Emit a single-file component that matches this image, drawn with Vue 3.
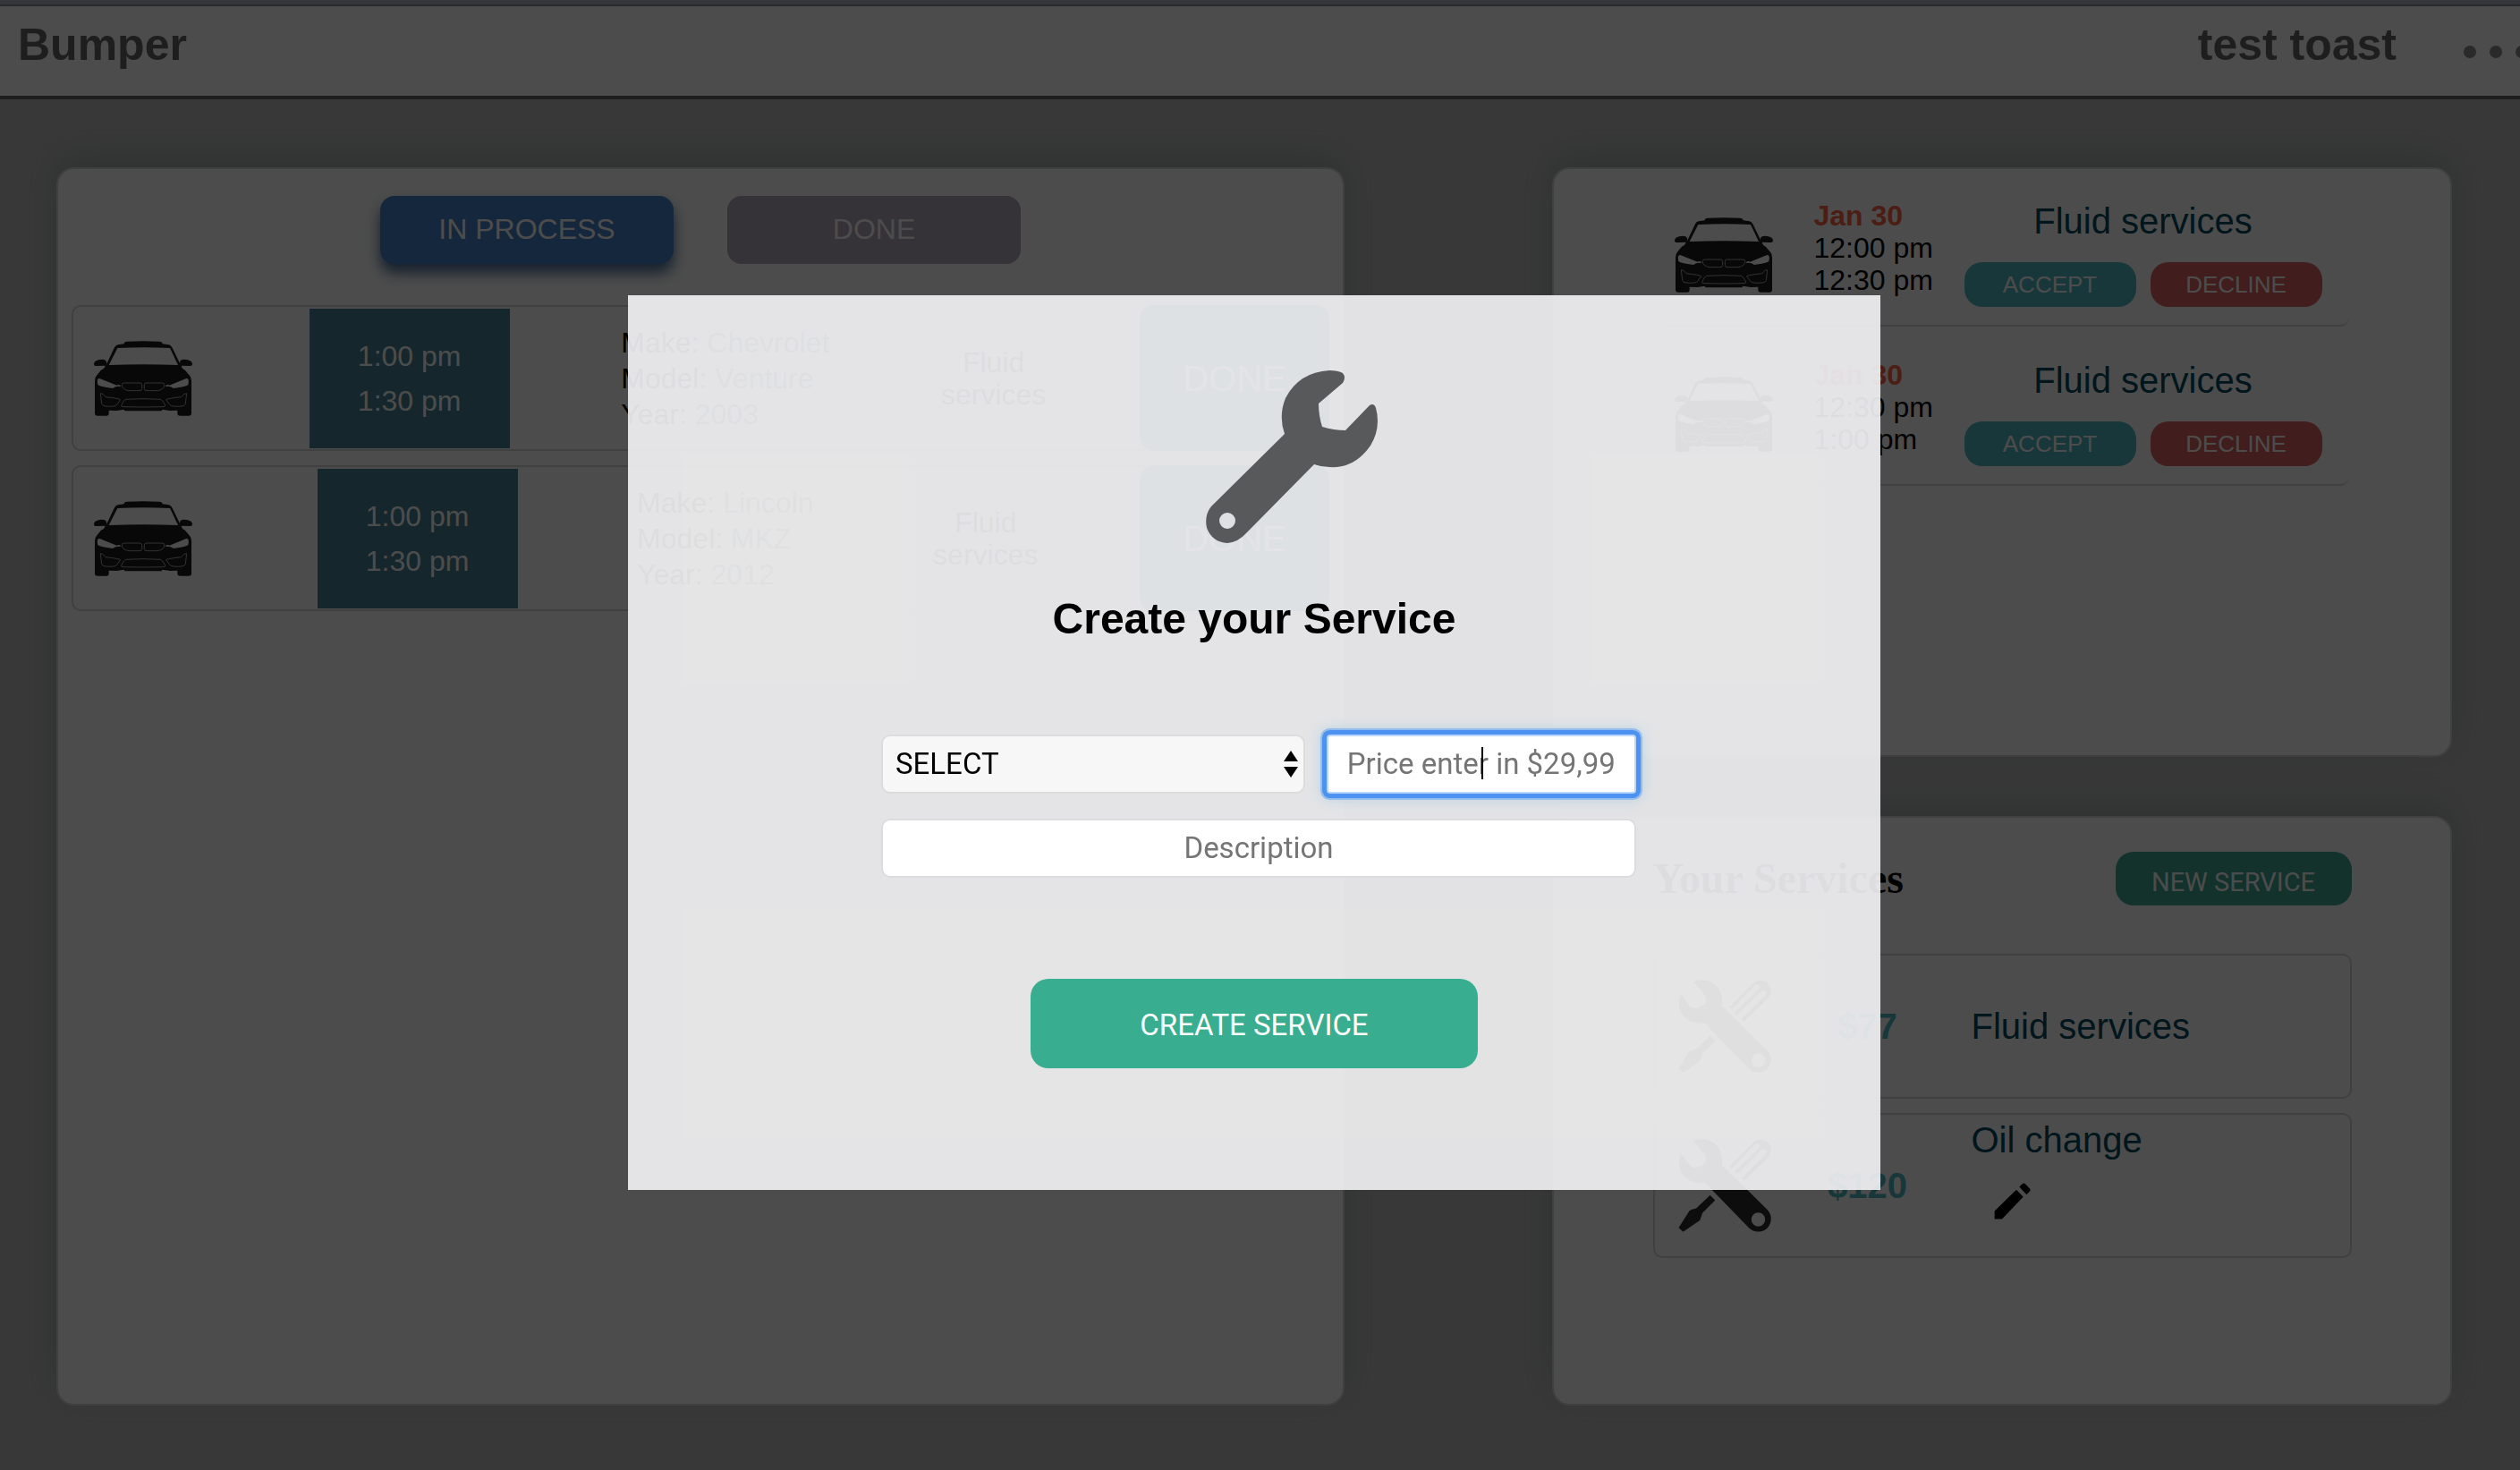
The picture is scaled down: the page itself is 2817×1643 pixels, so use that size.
<script setup>
import { ref } from 'vue'

const jobs = [
  { start: '1:00 pm', end: '1:30 pm', make: 'Chevrolet', model: 'Venture', year: '2003', service: 'Fluid services' },
  { start: '1:00 pm', end: '1:30 pm', make: 'Lincoln', model: 'MKZ', year: '2012', service: 'Fluid services' },
]

const requests = [
  { date: 'Jan 30', start: '12:00 pm', end: '12:30 pm', service: 'Fluid services' },
  { date: 'Jan 30', start: '12:30 pm', end: '1:00 pm', service: 'Fluid services' },
]

const services = [
  { price: '$77', name: 'Fluid services', editable: false },
  { price: '$120', name: 'Oil change', editable: true },
]

const kind = ref('')
const price = ref('')
const description = ref('')
</script>

<template>
  <div class="page">
    <svg class="defs" width="0" height="0" aria-hidden="true">
      <symbol id="car" viewBox="45 57 330 250">
        <path
          fill="#1b1b1b"
          fill-rule="evenodd"
          d="M146 66Q146 58 156 58Q210 55 264 58Q274 58 275 66L296 69Q303 70 307 78L336 137Q330 128 336 121Q342 117 356 119Q375 122 375 134Q375 141 366 140L338 139Q342 152 349 153L366 172Q372 178 372 190V298Q372 307 363 307H334Q325 307 325 298V289L300 290L274 286L272 291H148L146 286L122 290L95 289V298Q95 307 87 307H57Q48 307 48 298V190Q48 178 54 172L70 153Q78 152 83 139L56 140Q45 141 45 134Q45 122 64 119Q78 117 84 121Q90 128 86 137L114 78Q118 70 125 69ZM124 80L95 137Q210 133 327 137L300 80Q212 75 124 80ZM58 185Q55 190 58 203Q62 209 108 215Q118 207 136 209Q132 200 122 205L66 183Q60 181 58 185ZM361 185Q364 190 361 203Q357 209 312 215Q302 207 284 209Q288 200 298 205L353 183Q359 181 361 185Z"
        />
        <g fill="none" stroke="#a8a8a8" stroke-width="3">
          <path d="M148 197H200Q206 197 206 204V216Q206 223 198 223H162Q140 220 138 203Q138 197 148 197Z" />
          <path d="M272 197H220Q214 197 214 204V216Q214 223 222 223H258Q280 220 282 203Q282 197 272 197Z" />
          <path d="M67 232L71 267Q73 274 84 275Q116 278 122 270L134 253Q128 249 84 244L75 234Z" />
          <path d="M356 232L352 267Q350 274 339 275Q305 278 299 270L287 253Q293 249 338 244L348 234Z" />
          <path d="M152 252Q210 248 268 252Q275 253 284 272Q285 277 276 277Q210 279 144 277Q135 277 137 272Q145 253 152 252Z" />
        </g>
      </symbol>
      <symbol id="tools" viewBox="49 89 310 311">
        <g fill="#2e2e2e">
          <path
            fill-rule="evenodd"
            d="M97 96Q130 83 160 97Q200 120 195 176L347 326Q363 345 357 368Q350 392 327 398Q303 402 286 387L137 234Q95 240 67 212Q42 182 57 137L85 175Q97 188 110 184L132 174Q144 167 142 156Q141 145 136 138ZM316 335A23 23 0 1 0 316 381A23 23 0 1 0 316 335Z"
          />
          <path
            fill-rule="evenodd"
            d="M220 180L301 99Q320 84 342 96Q366 115 355 143Q353 148 349 152L269 229L259 221L340 140Q346 132 340 126Q333 122 326 127L245 207L237 199L318 120Q324 112 318 106Q311 103 305 107L228 188Z"
          />
          <path d="M155 277L172 294L129 337Q128 342 121 361L65 399L50 386L86 329Q92 325 109 321Z" />
        </g>
      </symbol>
      <symbol id="pencil" viewBox="1108 241 123 122">
        <path fill="#000" d="M1110 335L1183 264L1206 288L1135 362H1110ZM1193 254L1203 244Q1208 240 1213 244L1228 260Q1232 265 1228 269L1217 280Z" />
      </symbol>
    </svg>

    <header class="topbar">
      <h1 class="brand">Bumper</h1>
      <div class="account">
        <span class="user">test toast</span>
        <button class="more" type="button" aria-label="Menu">
          <svg width="63" height="14" viewBox="0 0 63 14" fill="#8c8c8c">
            <circle cx="7" cy="7" r="7" />
            <circle cx="36" cy="7" r="7" />
            <circle cx="65" cy="7" r="7" />
          </svg>
        </button>
      </div>
    </header>

    <main class="board">
      <section class="panel jobs">
        <div class="tabs">
          <button class="tab active" type="button">IN PROCESS</button>
          <button class="tab" type="button">DONE</button>
        </div>
        <article v-for="job in jobs" :key="job.make" class="job">
          <svg class="car"><use href="#car" /></svg>
          <div class="slot">
            <span>{{ job.start }}</span>
            <span>{{ job.end }}</span>
          </div>
          <div class="vehicle">
            <div>Make: <span>{{ job.make }}</span></div>
            <div>Model: <span>{{ job.model }}</span></div>
            <div>Year: <span>{{ job.year }}</span></div>
          </div>
          <div class="job-service">{{ job.service }}</div>
          <button class="finish" type="button">DONE</button>
        </article>
      </section>

      <div class="side">
        <section class="panel requests">
          <article v-for="item in requests" :key="item.start" class="request">
            <svg class="car"><use href="#car" /></svg>
            <div class="when">
              <strong>{{ item.date }}</strong>
              <span>{{ item.start }}</span>
              <span>{{ item.end }}</span>
            </div>
            <div class="answer">
              <div class="service-name">{{ item.service }}</div>
              <div class="choices">
                <button class="pill accept" type="button">ACCEPT</button>
                <button class="pill decline" type="button">DECLINE</button>
              </div>
            </div>
          </article>
        </section>

        <section class="panel services">
          <div class="services-head">
            <h2>Your Services</h2>
            <button class="new-service" type="button">NEW SERVICE</button>
          </div>
          <article v-for="item in services" :key="item.name" class="service">
            <svg class="tools"><use href="#tools" /></svg>
            <div class="price">{{ item.price }}</div>
            <div class="offer" :class="{ editable: item.editable }">
              <div class="service-name">{{ item.name }}</div>
              <button v-if="item.editable" class="edit" type="button" aria-label="Edit">
                <svg width="41" height="41"><use href="#pencil" /></svg>
              </button>
            </div>
          </article>
        </section>
      </div>
    </main>

    <div class="overlay">
      <form class="modal" @submit.prevent>
        <svg class="wrench" width="193" height="193" viewBox="0 0 193 193" aria-hidden="true">
          <path
            fill="#58595b"
            fill-rule="evenodd"
            d="M138 0Q148 0 153 3Q157 8 153 14L126 37Q126 50 130 63Q143 67 156 67L183 39Q188 36 190 42Q196 64 184 84Q166 110 138 108Q129 108 121 105L45 182Q36 192 24 193Q7 192 1 176Q-2 162 6 152L88 71Q81 51 89 31Q104 2 138 0ZM24 159A9 9 0 1 0 24 177A9 9 0 1 0 24 159Z"
          />
        </svg>
        <h2 class="modal-title">Create your Service</h2>
        <div class="fields">
          <div class="kind">
            <select v-model="kind" aria-label="Service">
              <option value="">SELECT</option>
              <option value="fluid">Fluid services</option>
              <option value="oil">Oil change</option>
            </select>
            <svg class="arrows" width="16" height="30" viewBox="0 0 16 30" aria-hidden="true">
              <path d="M8 0L16 12H0ZM0 18H16L8 30Z" />
            </svg>
          </div>
          <div class="cost">
            <input v-model="price" type="text" placeholder="Price enter in $29,99" aria-label="Price" />
            <span class="caret"></span>
          </div>
          <input v-model="description" class="description" type="text" placeholder="Description" aria-label="Description" />
        </div>
        <button class="create" type="submit">CREATE SERVICE</button>
      </form>
    </div>
  </div>
</template>

<style>
body {
  margin: 0;
  background: #bdbdbd;
}
</style>

<style scoped>
.page,
.page * {
  box-sizing: border-box;
}
.page {
  display: flex;
  flex-direction: column;
  min-height: 100vh;
  overflow: hidden;
  background: #bdbdbd;
  color: #000;
  font: 32px/36px "Liberation Sans", Arial, sans-serif;
}
.defs {
  position: absolute;
}
button {
  padding: 0;
  border: 0;
  color: #fff;
  font: inherit;
  cursor: pointer;
}
h1,
h2 {
  margin: 0;
}

/* Top bar */
.topbar {
  display: flex;
  align-items: center;
  justify-content: space-between;
  height: 111px;
  padding: 0 0 12px 20px;
  border-top: 5px solid #b1b4c8;
  border-bottom: 4px solid #666;
  background: #fff;
  box-shadow: inset 0 2px 0 #8c8c8c;
  color: #666;
}
.brand,
.user {
  font-size: 50px;
  line-height: 56px;
  font-weight: 700;
}
.account {
  display: flex;
  align-items: center;
  gap: 75px;
}
.more {
  display: flex;
  padding-top: 16px;
  background: none;
}

/* Panels */
.board {
  flex: 1;
  display: grid;
  grid-template-columns: 1440fr 1006fr;
  gap: 232px;
  padding: 76px 76px 72px 63px;
}
.side {
  display: grid;
  grid-template-rows: 1fr 1fr;
  gap: 66px;
}
.panel {
  border: 2px solid #d6d6d6;
  border-radius: 20px;
  background: #fff;
  box-shadow: 0 -12px 40px rgba(20, 70, 50, 0.2);
}

/* Jobs */
.jobs {
  display: flex;
  flex-direction: column;
  gap: 16px;
  padding: 30px 15px;
}
.tabs {
  display: flex;
  justify-content: center;
  gap: 60px;
  margin-bottom: 30px;
}
.tab {
  width: 328px;
  height: 76px;
  padding-bottom: 2px;
  border-radius: 16px;
  background: #b1a7bb;
}
.tab.active {
  background: #4682c8;
  box-shadow: 0 10px 16px rgba(50, 90, 140, 0.9);
}
.job {
  display: flex;
  align-items: center;
  justify-content: space-between;
  height: 163px;
  padding-left: 23px;
  border: 2px solid #d6d6d6;
  border-radius: 10px;
}
.car {
  flex: none;
  width: 110px;
  height: 84px;
}
.job .car {
  margin-right: 6px;
}
.slot {
  display: flex;
  flex-direction: column;
  justify-content: center;
  width: 224px;
  height: 156px;
  background: #467f96;
  color: #fff;
  line-height: 50px;
  text-align: center;
}
.vehicle {
  line-height: 40px;
}
.vehicle span {
  color: #33475b;
}
.job-service {
  width: min-content;
  text-align: center;
}
.finish {
  width: 212px;
  height: 163px;
  margin: 0 -2px 0 -20px;
  border-radius: 16px;
  background: #0097a7;
  font-size: 40px;
}

/* Requests */
.requests {
  display: flex;
  flex-direction: column;
  align-items: center;
  gap: 2px;
}
.request {
  display: flex;
  width: 775px;
  height: 176px;
  padding: 34px 0 0 21px;
  border-bottom: 2px solid #d6d6d6;
  border-radius: 10px;
}
.request .car {
  margin-top: 20px;
}
.when {
  display: flex;
  flex-direction: column;
  width: 214px;
  padding-left: 46px;
}
.when strong {
  color: #ff6347;
}
.answer {
  text-align: center;
}
.service-name {
  color: #004b60;
  font-size: 40px;
  line-height: 48px;
}
.choices {
  display: flex;
  gap: 16px;
  margin-top: 22px;
}
.pill {
  width: 192px;
  height: 50px;
  border-radius: 20px;
  font-size: 26px;
}
.accept {
  background: #53b7c1;
}
.decline {
  background: #dc6161;
}

/* Services */
.services {
  display: flex;
  flex-direction: column;
  align-items: center;
  gap: 16px;
  padding-top: 38px;
}
.services-head {
  display: flex;
  align-items: center;
  justify-content: space-between;
  width: 781px;
  margin-bottom: 38px;
}
.services-head h2 {
  font: 700 48px/56px "Liberation Serif", "Times New Roman", serif;
}
.new-service {
  width: 264px;
  height: 60px;
  padding-top: 8px;
  border-radius: 20px;
  background: #3ca78f;
  font-family: Roboto, sans-serif;
  font-size: 29px;
}
.service {
  display: flex;
  align-items: center;
  width: 781px;
  height: 162px;
  padding-left: 26px;
  border: 2px solid #d6d6d6;
  border-radius: 10px;
}
.tools {
  width: 104px;
  height: 104px;
}
.price {
  width: 216px;
  color: #53b7c1;
  font-size: 40px;
  font-weight: 700;
  text-align: center;
}
.offer {
  padding-left: 8px;
}
.offer.editable {
  align-self: flex-start;
  padding-top: 4px;
}
.edit {
  display: block;
  margin: 24px 0 0 25px;
  background: none;
}
.edit svg {
  display: block;
}

/* Modal */
.overlay {
  position: fixed;
  inset: 0;
  display: flex;
  align-items: center;
  justify-content: center;
  padding: 16px 13px 0 0;
  background: rgba(0, 0, 0, 0.7);
}
.modal {
  display: flex;
  flex-direction: column;
  align-items: center;
  width: 1400px;
  max-width: 100%;
  min-height: 1000px;
  padding-top: 84px;
  background: rgba(245, 245, 247, 0.9);
}
.wrench {
  margin-left: 84px;
}
.modal-title {
  margin-top: 57px;
  font-size: 48px;
  line-height: 56px;
}
.fields {
  display: grid;
  grid-template-columns: 473fr 346fr;
  gap: 28px 24px;
  width: 844px;
  margin: 101px 0 0 10px;
}
.kind,
.cost {
  position: relative;
}
select,
input {
  display: block;
  width: 100%;
  height: 66px;
  margin: 0;
  border: 2px solid #dcdcdc;
  border-radius: 10px;
  outline: 0;
  background: #fff;
  color: #000;
  font: 33px/40px Roboto, sans-serif;
}
select {
  appearance: none;
  padding: 0 48px 0 14px;
  background: #f7f7f7;
}
input {
  padding: 0 12px;
  text-align: center;
}
input::placeholder {
  color: #757575;
  opacity: 1;
}
.arrows {
  position: absolute;
  top: 18px;
  right: 8px;
  pointer-events: none;
}
.cost input {
  border-color: #bcd5fa;
  border-radius: 4px;
  box-shadow: 0 0 0 5px #4d92f0, 0 0 0 7px #94bdec, 0 0 14px 7px rgba(120, 190, 230, 0.4);
}
.caret {
  position: absolute;
  top: 14px;
  left: 50%;
  width: 2px;
  height: 36px;
  background: #000;
}
.description {
  grid-column: 1 / -1;
}
.create {
  width: 500px;
  height: 100px;
  margin-top: 113px;
  padding-top: 4px;
  border-radius: 20px;
  background: #38ad8f;
  font-family: Roboto, sans-serif;
  font-size: 33px;
}
</style>
